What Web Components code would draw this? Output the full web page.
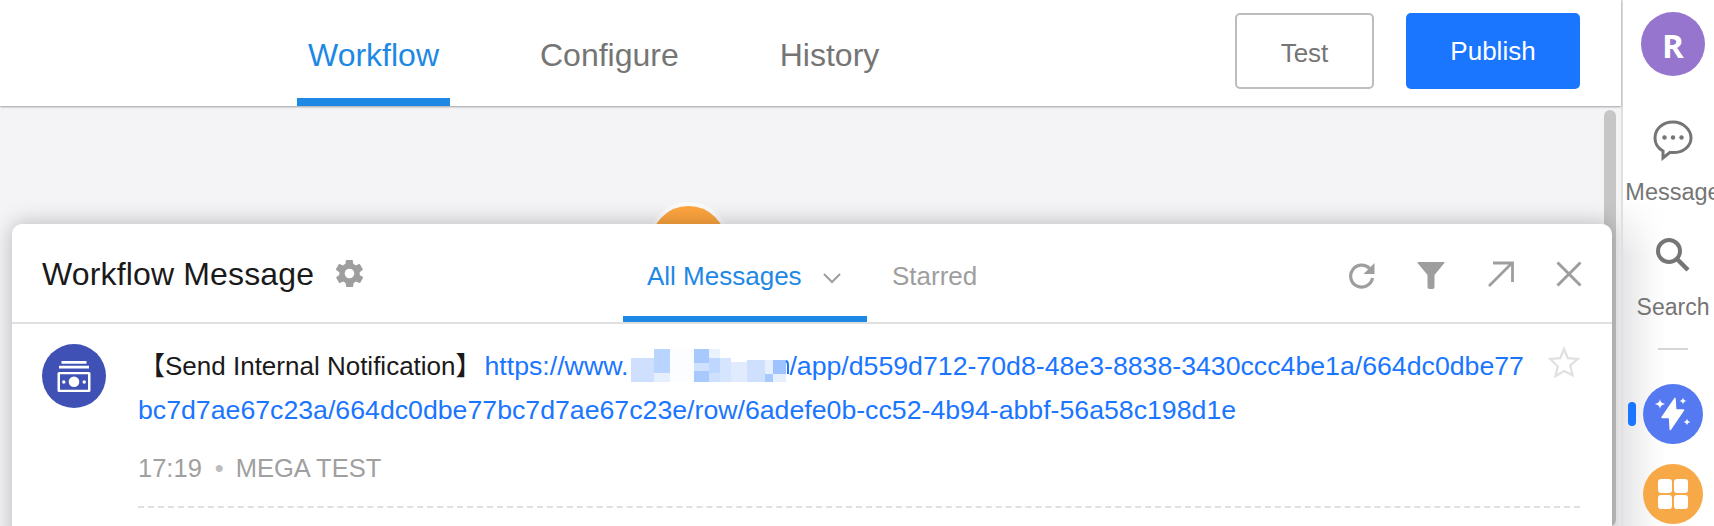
<!DOCTYPE html>
<html>
<head>
<meta charset="utf-8">
<style>
  html, body { margin: 0; height: 100%; overflow: hidden; background: #f4f4f6; }
  body { font-family: "Liberation Sans", "Noto Sans CJK SC", sans-serif; }
</style>
</head>
<body>
<app-shell>
  <top-bar slot="main"></top-bar>
  <flow-canvas slot="main">
    <message-panel>
      <message-row></message-row>
    </message-panel>
  </flow-canvas>
  <side-rail slot="rail"></side-rail>
</app-shell>

<script>
class AppShell extends HTMLElement {
  constructor () {
    super()
    this.shadow = this.attachShadow({ mode: 'open' })
  }

  connectedCallback () {
    this.shadow.innerHTML =
      `
      <style>
        :host {
          display: flex;
          height: 526px;
          width: 1714px;
          overflow: hidden;
        }
        .main {
          display: flex;
          flex-direction: column;
          width: 1621px;
        }
      </style>
      <div class="main"><slot name="main"></slot></div>
      <slot name="rail"></slot>
    `
  }
}

class TopBar extends HTMLElement {
  constructor () {
    super()
    this.shadow = this.attachShadow({ mode: 'open' })
  }

  connectedCallback () {
    this.shadow.innerHTML =
      `
      <style>
        :host {
          align-items: flex-start;
          background: #fff;
          box-shadow: 0 1px 2px rgba(0,0,0,0.35);
          display: flex;
          flex: none;
          height: 106px;
          position: relative;
          z-index: 2;
        }
        nav {
          display: flex;
          margin-left: 297px;
        }
        .tab {
          box-sizing: border-box;
          color: #757575;
          font-size: 32px;
          height: 106px;
          line-height: 110px;
          margin-right: 79px;
          padding: 0 11px;
        }
        .tab.active {
          border-bottom: 8px solid #1e88e5;
          color: #1e88e5;
        }
        .actions {
          display: flex;
          gap: 32px;
          margin: 13px 41px 0 auto;
        }
        button {
          border-radius: 5px;
          font-family: inherit;
          height: 76px;
          padding: 0;
        }
        .test {
          background: #fff;
          border: 2px solid #bdbdbd;
          color: #757575;
          font-size: 26px;
          padding-top: 5px;
          width: 139px;
        }
        .publish {
          background: #1a75ff;
          border: none;
          color: #fff;
          font-size: 26px;
          width: 174px;
        }
      </style>
      <nav>
        <div class="tab active">Workflow</div>
        <div class="tab">Configure</div>
        <div class="tab">History</div>
      </nav>
      <div class="actions">
        <button class="test">Test</button>
        <button class="publish">Publish</button>
      </div>
    `
  }
}

class FlowCanvas extends HTMLElement {
  constructor () {
    super()
    this.shadow = this.attachShadow({ mode: 'open' })
  }

  connectedCallback () {
    this.shadow.innerHTML =
      `
      <style>
        :host {
          background: #f4f4f6;
          display: block;
          flex: 1;
          position: relative;
        }
        .scrollbar {
          background: #c6c6c6;
          border-radius: 6px;
          bottom: 0;
          position: absolute;
          right: 5px;
          top: 4px;
          width: 12px;
        }
        .node {
          background: #fda53f;
          border: 4px solid #fbfbfb;
          border-radius: 50%;
          height: 75px;
          left: 647px;
          position: absolute;
          top: 96px;
          width: 75px;
        }
      </style>
      <div class="scrollbar"></div>
      <div class="node"></div>
      <slot></slot>
    `
  }
}

class MessagePanel extends HTMLElement {
  constructor () {
    super()
    this.shadow = this.attachShadow({ mode: 'open' })
  }

  connectedCallback () {
    this.shadow.innerHTML =
      `
      <style>
        :host {
          background: #fff;
          border-radius: 10px 10px 0 0;
          box-shadow: 0 0 22px rgba(0,0,0,0.26);
          display: block;
          height: 340px;
          left: 12px;
          position: absolute;
          top: 118px;
          width: 1600px;
        }
        header {
          align-items: flex-start;
          border-bottom: 2px solid #e0e0e0;
          display: flex;
          height: 98px;
          position: relative;
        }
        h2 {
          color: #1a1a1a;
          font-size: 32px;
          font-weight: 400;
          letter-spacing: 0.15px;
          line-height: 40px;
          margin: 30px 0 0 30px;
        }
        .gear {
          height: 33px;
          margin: 33px 0 0 19px;
          width: 33px;
        }
        .tabs {
          display: flex;
          left: 611px;
          position: absolute;
          top: 0;
        }
        .tabs div {
          box-sizing: border-box;
          height: 98px;
        }
        .all {
          align-items: center;
          border-bottom: 6px solid #1e88e5;
          color: #1e88e5;
          display: flex;
          font-size: 26px;
          padding: 12px 0 0 24px;
          white-space: nowrap;
          width: 244px;
        }
        .all svg {
          margin-left: 21px;
          margin-top: 4px;
        }
        .starred {
          color: #9e9e9e;
          font-size: 26px;
          line-height: 105px;
          margin-left: 25px;
        }
        .tools {
          display: flex;
          gap: 42px;
          margin: 37px 30px 0 auto;
        }
        .tools svg {
          display: block;
        }
      </style>
      <header>
        <h2>Workflow Message</h2>
        <svg class="gear" viewBox="0 0 24 24"><path fill="#9e9e9e" d="M19.4 13a7.6 7.6 0 0 0 0-2l2.1-1.6a.5.5 0 0 0 .1-.6l-2-3.5a.5.5 0 0 0-.6-.2l-2.5 1a7.3 7.3 0 0 0-1.7-1l-.4-2.6a.5.5 0 0 0-.5-.4h-4a.5.5 0 0 0-.5.4l-.4 2.6a7.3 7.3 0 0 0-1.7 1l-2.5-1a.5.5 0 0 0-.6.2l-2 3.5a.5.5 0 0 0 .1.6L4.6 11a7.6 7.6 0 0 0 0 2l-2.1 1.6a.5.5 0 0 0-.1.6l2 3.5c.1.2.4.3.6.2l2.5-1a7.3 7.3 0 0 0 1.7 1l.4 2.6c0 .2.2.4.5.4h4c.3 0 .5-.2.5-.4l.4-2.6a7.3 7.3 0 0 0 1.7-1l2.5 1c.2.1.5 0 .6-.2l2-3.5a.5.5 0 0 0-.1-.6L19.4 13zM12 15.5a3.5 3.5 0 1 1 0-7 3.5 3.5 0 0 1 0 7z"/></svg>
        <div class="tabs">
          <div class="all">All Messages
            <svg width="18" height="12" viewBox="0 0 18 12"><path d="M1 2l8 8 8-8" fill="none" stroke="#9e9e9e" stroke-width="2"/></svg>
          </div>
          <div class="starred">Starred</div>
        </div>
        <div class="tools">
          <svg width="30" height="30" viewBox="0 0 30 30"><path d="M25.5 17a11 11 0 1 1-3-9.6" fill="none" stroke="#9e9e9e" stroke-width="3.2"/><path d="M27.5 2v11h-11z" fill="#9e9e9e"/></svg>
          <svg width="28" height="28" viewBox="0 0 28 28" style="margin-left:-2px"><path d="M1 1h26a.6.6 0 0 1 .4 1L17.5 14v12a2 2 0 0 1-2 2h-3a2 2 0 0 1-2-2V14L.6 2A.6.6 0 0 1 1 1z" fill="#9e9e9e"/></svg>
          <svg width="26" height="26" viewBox="0 0 26 26" style="margin-left:1px"><path d="M1 25L24 2M5 2h19.5v19" fill="none" stroke="#9e9e9e" stroke-width="2.8"/></svg>
          <svg width="26" height="26" viewBox="0 0 26 26"><path d="M1.5 1.5l23 23M24.5 1.5l-23 23" fill="none" stroke="#9e9e9e" stroke-width="3"/></svg>
        </div>
      </header>
      <slot></slot>
    `
  }
}

class MessageRow extends HTMLElement {
  constructor () {
    super()
    this.shadow = this.attachShadow({ mode: 'open' })
  }

  connectedCallback () {
    // pixel blocks of the censored domain, x y w h colour
    const blocks = [
      [0, 9, 23, 24, '#cfe0fe'], [23, 0, 16, 24, '#b9d4fe'], [23, 24, 16, 9, '#e6effe'],
      [39, 0, 24, 33, '#fcfdff'], [63, 0, 15, 14, '#a8c9fe'], [63, 14, 15, 8, '#d0e1fe'],
      [63, 22, 15, 11, '#a8c9fe'], [78, 0, 11, 9, '#eaf2fe'], [78, 9, 11, 15, '#bfd7fe'],
      [78, 24, 11, 9, '#cfe0fe'], [89, 9, 11, 24, '#d6e5fe'], [100, 13, 16, 20, '#e0ebfe'],
      [116, 11, 18, 22, '#cfe0fe'], [134, 11, 8, 14, '#e6effe'], [134, 25, 8, 8, '#a8c9fe'],
      [142, 11, 13, 14, '#9fc3fe'], [142, 25, 13, 8, '#e6effe']
    ].map(b => `<rect x="${b[0]}" y="${b[1]}" width="${b[2]}" height="${b[3]}" fill="${b[4]}"/>`).join('')

    this.shadow.innerHTML =
      `
      <style>
        :host {
          display: flex;
          padding: 20px 32px 0 30px;
        }
        .avatar {
          align-items: center;
          background: #3f51b5;
          border-radius: 50%;
          display: flex;
          flex: none;
          height: 64px;
          justify-content: center;
          width: 64px;
        }
        .body {
          flex: 1;
          margin-left: 32px;
          position: relative;
        }
        .text {
          color: #1a1a1a;
          font-size: 26px;
          line-height: 44px;
          text-indent: 1px;
          width: 1395px;
          word-break: break-all;
        }
        .text a {
          color: #1a75ff;
          font-size: 26.7px;
          margin-left: 3px;
          text-decoration: none;
        }
        .text svg {
          height: 33px;
          margin-left: 3px;
          vertical-align: -7px;
          width: 158px;
        }
        .star {
          position: absolute;
          right: 0;
          top: 2px;
        }
        .meta {
          border-bottom: 2px dashed #e0e0e0;
          color: #a0a0a0;
          font-size: 25.5px;
          height: 60px;
          line-height: 44px;
          margin-top: 14px;
        }
        .dot {
          color: #bdbdbd;
          margin: 0 12px 0 13px;
        }
      </style>
      <div class="avatar">
        <svg width="34" height="31" viewBox="0 0 34 31">
          <path d="M4.500 0h25v2.800h-25zM2 4.800h30v2.800H2z" fill="#fff"/>
          <path fill-rule="evenodd" fill="#fff" d="M2 11h30a1.500 1.500 0 0 1 1.500 1.500v17a1.500 1.500 0 0 1-1.500 1.500H2a1.500 1.500 0 0 1-1.500-1.500v-17A1.500 1.500 0 0 1 2 11zm1 2.300v15.400h28V13.300z"/>
          <circle cx="17" cy="20.800" r="5.300" fill="#fff"/>
          <circle cx="6.800" cy="21" r="1.700" fill="#fff"/>
          <circle cx="27.200" cy="21" r="1.700" fill="#fff"/>
        </svg>
      </div>
      <div class="body">
        <div class="text">【Send Internal Notification】<a href="#">https://www.<svg viewBox="0 0 158 33">${blocks}<path d="M155 12q2 .500 2 4v9" fill="none" stroke="#1a75ff" stroke-width="2"/></svg>/app/d559d712-70d8-48e3-8838-3430ccc4be1a/664dc0dbe77bc7d7ae67c23a/664dc0dbe77bc7d7ae67c23e/row/6adefe0b-cc52-4b94-abbf-56a58c198d1e</a></div>
        <svg class="star" width="32" height="32" viewBox="0 0 32 32"><path d="M16 3l3.800 9.200 9.900.800-7.500 6.500 2.300 9.700L16 25l-8.500 5.200 2.300-9.700L2.300 13l9.900-.800z" fill="none" stroke="#e0e0e0" stroke-width="2.200" stroke-linejoin="miter"/></svg>
        <div class="meta">17:19<span class="dot">•</span>MEGA TEST</div>
      </div>
    `
  }
}

class SideRail extends HTMLElement {
  constructor () {
    super()
    this.shadow = this.attachShadow({ mode: 'open' })
  }

  connectedCallback () {
    this.shadow.innerHTML =
      `
      <style>
        :host {
          background: #fff;
          border-left: 2px solid #e0e0e0;
          box-sizing: border-box;
          color: #757575;
          display: flex;
          flex: none;
          flex-direction: column;
          height: 526px;
          overflow: hidden;
          position: relative;
          width: 93px;
        }
        .shade {
          background: linear-gradient(to right, #e6e6e8, #fafafa 30px, #fff 44px);
          bottom: 0;
          left: 0;
          -webkit-mask-image: linear-gradient(to bottom, transparent, #000 60px);
          mask-image: linear-gradient(to bottom, transparent, #000 60px);
          position: absolute;
          top: 196px;
          width: 50px;
        }
        .top {
          height: 106px;
          position: relative;
        }
        .avatar {
          align-items: center;
          background: #9575cd;
          border-radius: 50%;
          box-sizing: border-box;
          color: #fff;
          display: flex;
          font-family: "Open Sans", sans-serif;
          font-size: 33px;
          font-weight: 700;
          height: 64px;
          justify-content: center;
          margin: 12px 0 0 18px;
          padding-top: 2px;
          width: 64px;
        }
        .item {
          align-items: center;
          display: flex;
          flex-direction: column;
          font-size: 23px;
          line-height: 28px;
          position: relative;
          white-space: nowrap;
          width: 100px;
        }
        .item svg {
          display: block;
        }
        .line {
          background: #d6d6d6;
          flex: none;
          height: 2px;
          margin: 0 0 0 35px;
          position: relative;
          width: 30px;
        }
        .app {
          align-items: center;
          border-radius: 50%;
          display: flex;
          flex: none;
          height: 60px;
          justify-content: center;
          margin-left: 20px;
          position: relative;
          width: 60px;
        }
        .indicator {
          background: #1a75ff;
          border-radius: 4px;
          height: 24px;
          left: 5px;
          position: absolute;
          top: 402px;
          width: 8px;
        }
      </style>
      <div class="shade"></div>
      <div class="top"><div class="avatar">R</div></div>
      <div class="item" style="margin-top:13px">
        <svg width="42" height="42" viewBox="0 0 42 42"><path d="M21 3C10.500 3 3 10 3 19c0 6 3.400 10.500 8 13v7l7-5.600c1 .1 2 .2 3 .2 10.500 0 18-6.600 18-14.600S31.500 3 21 3z" fill="none" stroke="#757575" stroke-width="3"/><circle cx="12.500" cy="18.500" r="2.200" fill="#757575"/><circle cx="21" cy="18.500" r="2.200" fill="#757575"/><circle cx="29.500" cy="18.500" r="2.200" fill="#757575"/></svg>
        <span style="margin-top:17px;font-size:23.5px">Message</span>
      </div>
      <div class="item" style="margin-top:31px">
        <svg width="36" height="36" viewBox="0 0 36 36"><circle cx="14" cy="14" r="11" fill="none" stroke="#757575" stroke-width="4"/><path d="M22 22l11 11" stroke="#757575" stroke-width="4.500"/></svg>
        <span style="margin-top:20px">Search</span>
      </div>
      <div class="line" style="margin-top:27px"></div>
      <div class="indicator"></div>
      <div class="app" style="background:#5579f0;margin-top:34px">
        <svg width="60" height="60" viewBox="0 0 60 60" fill="#fff">
          <path d="M32 14.500L19 33.500h7.500l.8 12L40.500 26h-7.800z" stroke="#fff" stroke-width="1.500" stroke-linejoin="round"/>
          <path d="M17 15c.6 3 1.500 4 5 5-3.500 1-4.400 2-5 5-.6-3-1.500-4-5-5 3.500-1 4.400-2 5-5zM40 13.500c.4 2 1 2.900 3.500 3.500-2.500.6-3.100 1.500-3.500 3.500-.4-2-1-2.900-3.500-3.500 2.500-.6 3.100-1.500 3.500-3.500zM44 34.500c.4 2 1 2.900 3.500 3.500-2.500.6-3.100 1.500-3.500 3.500-.4-2-1-2.900-3.500-3.500 2.500-.6 3.100-1.500 3.500-3.500z"/>
        </svg>
      </div>
      <div class="app" style="background:#f7a948;margin-top:20px">
        <svg width="30" height="30" viewBox="0 0 30 30" fill="#fff"><rect width="14" height="14" rx="3"/><rect x="16" width="14" height="14" rx="3"/><rect y="16" width="14" height="14" rx="3"/><rect x="16" y="16" width="14" height="14" rx="3"/></svg>
      </div>
    `
  }
}

customElements.define('app-shell', AppShell)
customElements.define('top-bar', TopBar)
customElements.define('flow-canvas', FlowCanvas)
customElements.define('message-panel', MessagePanel)
customElements.define('message-row', MessageRow)
customElements.define('side-rail', SideRail)
</script>
</body>
</html>
